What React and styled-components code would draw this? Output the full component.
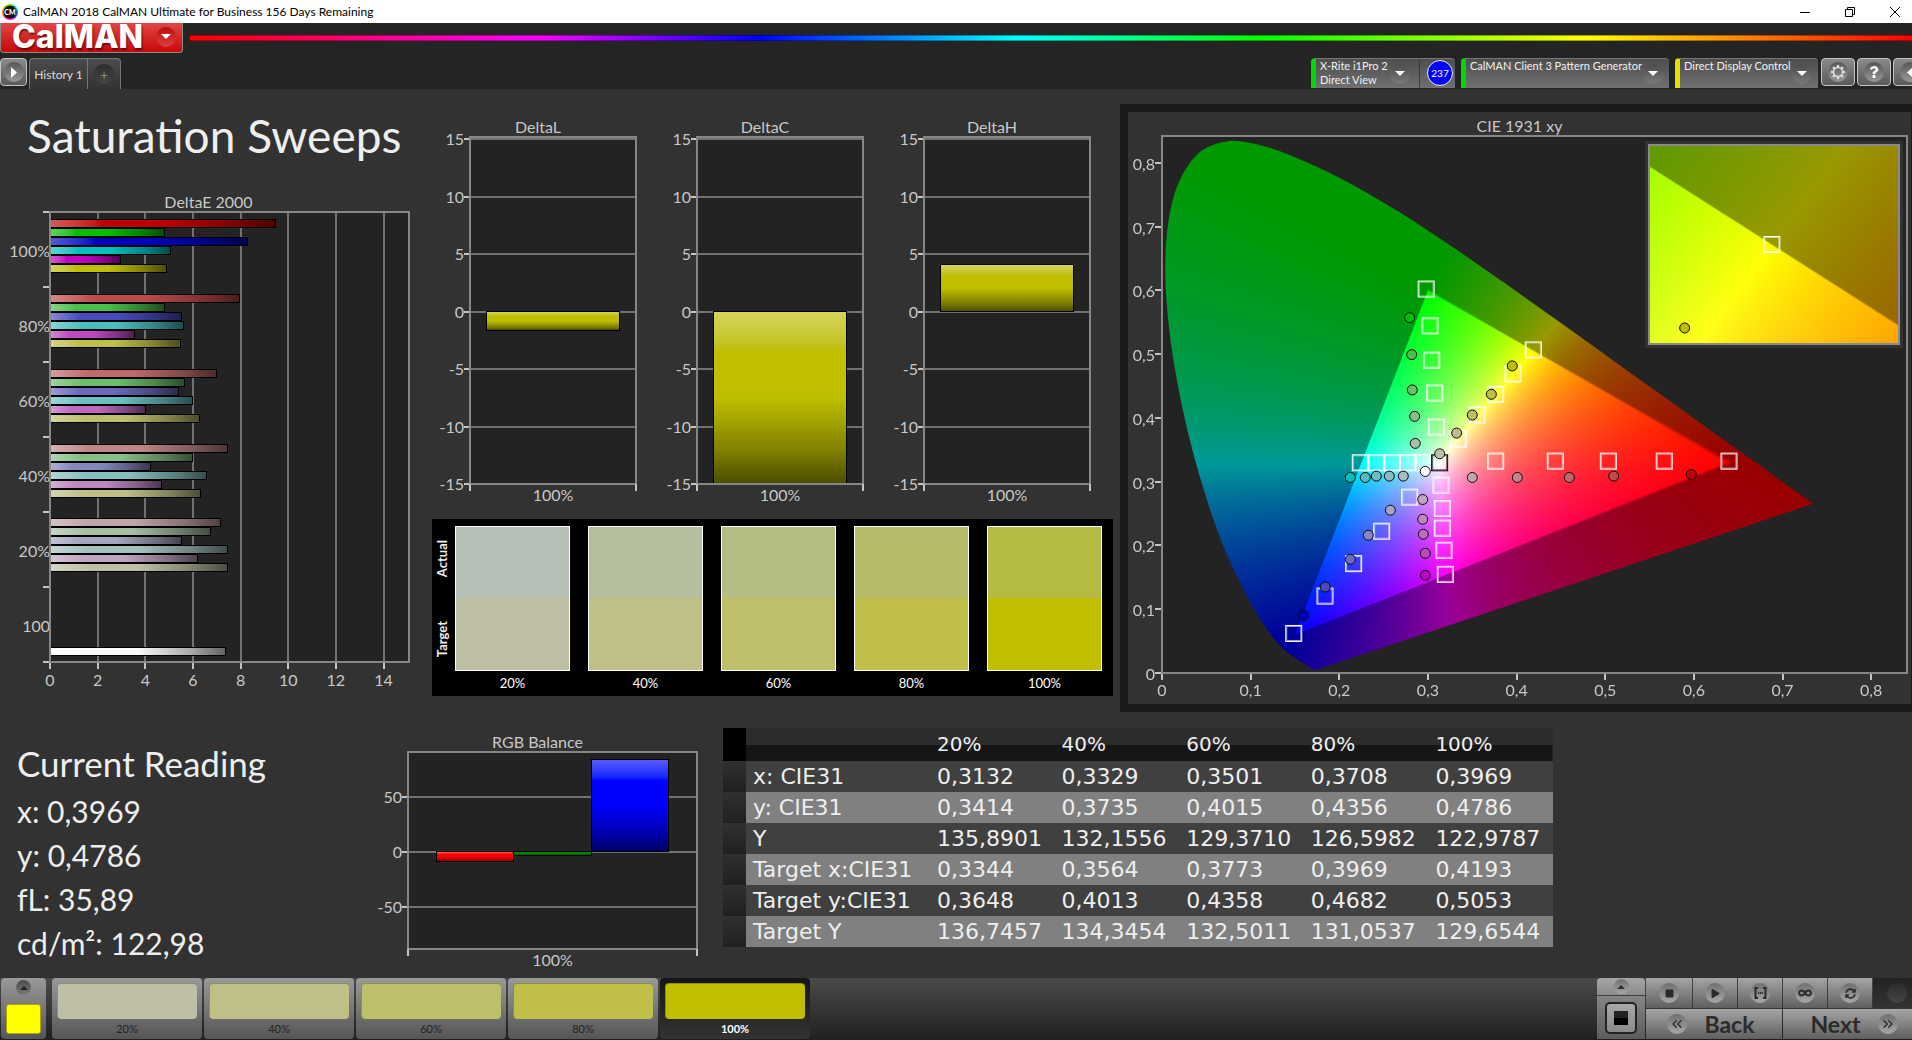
import React, { useEffect, useRef } from 'react';
import styled, { createGlobalStyle, css } from 'styled-components';
import { FaInfinity, FaPlay, FaQuestion, FaSyncAlt, FaStop } from 'react-icons/fa';
import { ChevronsLeft, ChevronsRight } from 'lucide-react';

const LEVELS = ['20%', '40%', '60%', '80%', '100%'];
const ACTUAL = ['#b6bfb5', '#b6bf9d', '#b5bd85', '#b7bb68', '#b5bb42'];
const TARGET = ['#bfbfa5', '#bfbf87', '#bfbf6a', '#bfbf4a', '#bfbf00'];

// low channel of a colour at 20 / 40 / 60 / 80 / 100 % saturation
const LOW = [165, 135, 106, 74, 0];
const HUES = {
  red: [1, 0, 0],
  green: [0, 1, 0],
  blue: [0, 0, 1],
  cyan: [0, 1, 1],
  magenta: [1, 0, 1],
  yellow: [1, 1, 0],
};
const HUE_NAMES = Object.keys(HUES);

const shade = (hue, level) => {
  const [r, g, b] = HUES[hue].map((on) => (on ? 191 : LOW[level]));
  return `rgb(${r}, ${g}, ${b})`;
};

const DELTA_E = [
  { label: '100%', level: 4, values: [9.46, 4.81, 8.29, 5.06, 2.96, 4.89] },
  { label: '80%', level: 3, values: [7.95, 4.81, 5.52, 5.6, 3.55, 5.48] },
  { label: '60%', level: 2, values: [6.99, 5.65, 5.39, 5.98, 4.01, 6.28] },
  { label: '40%', level: 1, values: [7.45, 5.98, 4.22, 6.57, 4.68, 6.32] },
  { label: '20%', level: 0, values: [7.16, 6.74, 5.52, 7.45, 6.19, 7.45] },
];
const WHITE_DELTA_E = 7.37;

const TABLE_ROWS = [
  ['x: CIE31', '0,3132', '0,3329', '0,3501', '0,3708', '0,3969'],
  ['y: CIE31', '0,3414', '0,3735', '0,4015', '0,4356', '0,4786'],
  ['Y', '135,8901', '132,1556', '129,3710', '126,5982', '122,9787'],
  ['Target x:CIE31', '0,3344', '0,3564', '0,3773', '0,3969', '0,4193'],
  ['Target y:CIE31', '0,3648', '0,4013', '0,4358', '0,4682', '0,5053'],
  ['Target Y', '136,7457', '134,3454', '132,5011', '131,0537', '129,6544'],
];

const LOCUS = [
  [0.1741, 0.005], [0.1733, 0.0048], [0.1714, 0.0051], [0.1689, 0.0069], [0.1644, 0.0109],
  [0.1566, 0.0177], [0.144, 0.0297], [0.1355, 0.0399], [0.1241, 0.0578], [0.1096, 0.0868],
  [0.0913, 0.1327], [0.0687, 0.2007], [0.0454, 0.295], [0.0235, 0.4127], [0.0082, 0.5384],
  [0.0039, 0.6548], [0.0139, 0.7502], [0.0389, 0.812], [0.0743, 0.8338], [0.1142, 0.8262],
  [0.1547, 0.8059], [0.1929, 0.7816], [0.2296, 0.7543], [0.2658, 0.7243], [0.3016, 0.6923],
  [0.3373, 0.6589], [0.3731, 0.6245], [0.4087, 0.5896], [0.4441, 0.5547], [0.4788, 0.5202],
  [0.5125, 0.4866], [0.5448, 0.4544], [0.5752, 0.4242], [0.6029, 0.3965], [0.627, 0.3725],
  [0.6658, 0.334], [0.6915, 0.3083], [0.719, 0.2809], [0.7347, 0.2653],
];

const TARGET_POINTS = [
  [0.298, 0.602], [0.3023, 0.5443], [0.3042, 0.4904], [0.3076, 0.439], [0.3095, 0.3856],
  [0.4189, 0.5066], [0.3959, 0.4689], [0.3764, 0.437], [0.3553, 0.4045], [0.3342, 0.3668],
  [0.3764, 0.3322], [0.4437, 0.3322], [0.5035, 0.3322], [0.5666, 0.3322], [0.6396, 0.3322],
  [0.2237, 0.3296], [0.2418, 0.3296], [0.2598, 0.3296], [0.2771, 0.3296], [0.2952, 0.3296],
  [0.3147, 0.2945], [0.3162, 0.2579], [0.3162, 0.227], [0.3181, 0.1924], [0.3196, 0.1547],
  [0.2794, 0.2757], [0.2478, 0.2223], [0.2162, 0.1715], [0.1839, 0.1206], [0.1486, 0.062],
];

// 20 % first, 100 % last
const MEASURED = {
  green: [[0.2857, 0.36], [0.285, 0.4024], [0.2823, 0.4438], [0.2817, 0.4992], [0.2794, 0.5573]],
  yellow: [[0.3132, 0.3437], [0.3324, 0.3762], [0.35, 0.4045], [0.3715, 0.437], [0.3951, 0.4815]],
  red: [[0.35, 0.3066], [0.4008, 0.3066], [0.4595, 0.3066], [0.5095, 0.3087], [0.5971, 0.3113]],
  cyan: [[0.2722, 0.3087], [0.2564, 0.3087], [0.2418, 0.3087], [0.2293, 0.3066], [0.2124, 0.3066]],
  magenta: [[0.2941, 0.2721], [0.2941, 0.2411], [0.2948, 0.2176], [0.297, 0.1877], [0.297, 0.1532]],
  blue: [[0.2576, 0.2553], [0.2327, 0.216], [0.2124, 0.1783], [0.1842, 0.1348], [0.1594, 0.0903]],
};

const CIE_VIEW = { x0: 0, x1: 0.8404, y0: 0, y1: 0.842 };
const INSET_VIEW = { x0: 0.388, x1: 0.4517, y0: 0.4738, y1: 0.5368 };

const pct = (n) => `${n * 100}%`;
const comma = (n) => String(n).replace('.', ',');

function chromaColor(x, y, softness) {
  const z = 1 - x - y;
  const r = 3.2406 * x - 1.5372 * y - 0.4986 * z;
  const g = -0.9689 * x + 1.8758 * y + 0.0415 * z;
  const b = 0.0557 * x - 0.204 * y + 1.057 * z;
  const max = Math.max(r, g, b);
  const edge = Math.min(r, g, b) / max;
  // soft step on the gamut edge
  const gain = 0.6 + 0.4 * Math.min(1, Math.max(0, edge / softness + 0.5));
  return [r, g, b].map((c) => (Math.max(0, c) / max) * 255 * gain);
}

function ChromaField({ view, width, height }) {
  const ref = useRef(null);

  useEffect(() => {
    const ctx = ref.current.getContext('2d');
    const img = ctx.createImageData(width, height);
    const sx = width / (view.x1 - view.x0);
    const sy = height / (view.y1 - view.y0);
    for (let j = 0; j < height; j++) {
      for (let i = 0; i < width; i++) {
        const x = view.x0 + (i + 0.5) / sx;
        const y = view.y1 - (j + 0.5) / sy;
        const c = chromaColor(x, y, 6 / sx);
        const k = (j * width + i) * 4;
        img.data[k] = c[0];
        img.data[k + 1] = c[1];
        img.data[k + 2] = c[2];
        img.data[k + 3] = 255;
      }
    }
    ctx.putImageData(img, 0, 0);

    // keep only what lies inside the spectral locus
    const pts = LOCUS.map(([x, y]) => [(x - view.x0) * sx, (view.y1 - y) * sy]);
    ctx.globalCompositeOperation = 'destination-in';
    ctx.beginPath();
    ctx.moveTo(...pts[0]);
    for (let i = 0; i < pts.length - 1; i++) {
      const p0 = pts[Math.max(0, i - 1)];
      const p1 = pts[i];
      const p2 = pts[i + 1];
      const p3 = pts[Math.min(pts.length - 1, i + 2)];
      ctx.bezierCurveTo(
        p1[0] + (p2[0] - p0[0]) / 6,
        p1[1] + (p2[1] - p0[1]) / 6,
        p2[0] - (p3[0] - p1[0]) / 6,
        p2[1] - (p3[1] - p1[1]) / 6,
        p2[0],
        p2[1],
      );
    }
    ctx.closePath();
    ctx.fill();
    ctx.globalCompositeOperation = 'source-over';
  }, [view, width, height]);

  return <Field ref={ref} width={width} height={height} />;
}

function Marker({ view, at, children }) {
  const x = (at[0] - view.x0) / (view.x1 - view.x0);
  const y = (view.y1 - at[1]) / (view.y1 - view.y0);
  return (
    <svg x={pct(x)} y={pct(y)} overflow="visible">
      {children}
    </svg>
  );
}

function Square({ color = '#fff' }) {
  return (
    <g fill="none" stroke={color}>
      <rect x="-8" y="-8" width="16" height="16" strokeWidth="1" />
      <rect x="-7" y="-7" width="14" height="14" strokeWidth="1" strokeOpacity="0.6" />
    </g>
  );
}

function Dot({ color }) {
  return <circle r="5" fill={color} stroke="#0a0a0a" strokeWidth="1" />;
}

function Gradients() {
  const glossy = (id, color, vertical) => (
    <linearGradient key={id} id={id} x1="0" y1="0" x2={vertical ? 0 : 1} y2={vertical ? 1 : 0}>
      <stop offset="0" stopColor={`color-mix(in srgb, ${color} 65%, #fff)`} />
      <stop offset="0.23" stopColor={color} />
      <stop offset="0.5" stopColor={color} />
      <stop offset="0.8" stopColor={`color-mix(in srgb, ${color} 68%, #000)`} />
      <stop offset="1" stopColor={`color-mix(in srgb, ${color} 40%, #000)`} />
    </linearGradient>
  );
  return (
    <HiddenSvg aria-hidden="true">
      <defs>
        {HUE_NAMES.map((hue) => LOW.map((_, level) => glossy(`${hue}-${level}`, shade(hue, level), false)))}
        {glossy('white-bar', 'rgb(250, 250, 250)', false)}
        {glossy('bar-yellow', 'rgb(191, 191, 0)', true)}
        {glossy('bar-red', 'rgb(255, 0, 0)', true)}
        {glossy('bar-green', 'rgb(0, 128, 0)', true)}
        {glossy('bar-blue', 'rgb(0, 0, 255)', true)}
      </defs>
    </HiddenSvg>
  );
}

function DeltaEChart() {
  const max = 15.07;
  const ticks = [0, 2, 4, 6, 8, 10, 12, 14];
  const groups = [...DELTA_E.map((g) => g.label), '100'];
  return (
    <Chart $left={50} $right={15}>
      <ChartTitle $shift={42}>DeltaE 2000</ChartTitle>
      <Plot $height={450}>
        <rect className="back" width="100%" height="100%" />
        {ticks.map((t) => (
          <g key={t}>
            <line className="grid" x1={pct(t / max)} x2={pct(t / max)} y1="0" y2="100%" />
            <svg x={pct(t / max)} y="100%" overflow="visible">
              <line className="tick" y2="7" />
              <text y="24" textAnchor="middle">{t}</text>
            </svg>
          </g>
        ))}
        {groups.map((label, i) => (
          <svg key={label} y={pct(i / 6)} overflow="visible">
            <line className="tick" x1="-7" x2="0" />
            <text x="0" y="45" textAnchor="end">{label}</text>
          </svg>
        ))}
        <svg y="100%" overflow="visible">
          <line className="tick" x1="-7" x2="0" />
        </svg>
        {DELTA_E.map((group, i) => (
          <svg key={group.label} y={pct(i / 6)} overflow="visible">
            {group.values.map((v, j) => (
              <rect
                key={HUE_NAMES[j]}
                className="bar"
                y={7 + j * 9}
                width={pct(v / max)}
                height="8"
                fill={`url(#${HUE_NAMES[j]}-${group.level})`}
              />
            ))}
          </svg>
        ))}
        <svg y={pct(5 / 6)} overflow="visible">
          <rect className="bar" y="60" width={pct(WHITE_DELTA_E / max)} height="8" fill="url(#white-bar)" />
        </svg>
        <rect className="frame" width="100%" height="100%" />
      </Plot>
    </Chart>
  );
}

function ColumnChart({ title, top, bottom, ticks, bars, height }) {
  const pos = (v) => (top - v) / (top - bottom);
  const step = 0.8 / bars.length;
  return (
    <Chart $left={46} $right={15}>
      <ChartTitle>{title}</ChartTitle>
      <Plot $height={height}>
        <rect className="back" width="100%" height="100%" />
        {ticks.map((t) => (
          <svg key={t} y={pct(pos(t))} overflow="visible">
            <line className="grid" x1="0" x2="100%" />
            <line className="tick" x1="-6" x2="0" />
            <text x="-6" y="6" textAnchor="end">{t}</text>
          </svg>
        ))}
        {bars.map(({ value, fill }, i) => {
          const y0 = pos(Math.max(value, 0));
          const y1 = Math.min(1, pos(Math.min(value, 0)));
          return (
            <rect
              key={fill}
              className="bar"
              x={pct(0.1 + i * step)}
              y={pct(y0)}
              width={pct(step)}
              height={pct(y1 - y0)}
              fill={`url(#${fill})`}
            />
          );
        })}
        <rect className="frame" width="100%" height="100%" />
        <svg y="100%" overflow="visible">
          <line className="tick" y2="7" />
          <line className="tick" x1="100%" x2="100%" y2="7" />
          <text x="50%" y="17" textAnchor="middle">100%</text>
        </svg>
      </Plot>
    </Chart>
  );
}

function CieChart() {
  const ticks = [0, 0.1, 0.2, 0.3, 0.4, 0.5, 0.6, 0.7, 0.8];
  return (
    <CiePanel>
      <ChartTitle>CIE 1931 xy</ChartTitle>
      <CieStack>
        <ChromaField view={CIE_VIEW} width={745} height={537} />
        <Plot $height={537}>
          {ticks.map((t) => (
            <g key={t}>
              <Marker view={CIE_VIEW} at={[t, 0]}>
                <line className="tick" y2="7" />
                <text y="23" textAnchor="middle">{comma(t)}</text>
              </Marker>
              <Marker view={CIE_VIEW} at={[0, t]}>
                <line className="tick" x1="-7" x2="0" />
                <text x="-7" y="7" textAnchor="end">{comma(t)}</text>
              </Marker>
            </g>
          ))}
          <rect className="frame" width="100%" height="100%" />
          {TARGET_POINTS.map((at) => (
            <Marker key={at.join()} view={CIE_VIEW} at={at}>
              <Square />
            </Marker>
          ))}
          <Marker view={CIE_VIEW} at={[0.3132, 0.3296]}>
            <Square color="#000" />
          </Marker>
          <Marker view={CIE_VIEW} at={[0.297, 0.3161]}>
            <Dot color="#fff" />
          </Marker>
          {Object.entries(MEASURED).map(([hue, points]) =>
            points.map((at, level) => (
              <Marker key={`${hue}${level}`} view={CIE_VIEW} at={at}>
                <Dot color={shade(hue, level)} />
              </Marker>
            )),
          )}
        </Plot>
        <Inset>
          <ChromaField view={INSET_VIEW} width={248} height={197} />
          <Plot $height={197}>
            <Marker view={INSET_VIEW} at={[0.4193, 0.5053]}>
              <Square />
            </Marker>
            <Marker view={INSET_VIEW} at={[0.3969, 0.4786]}>
              <Dot color="#bfbf00" />
            </Marker>
          </Plot>
        </Inset>
      </CieStack>
    </CiePanel>
  );
}

function Caret({ up, size = 10, color = '#fff' }) {
  return (
    <svg width={size} height={size / 2} viewBox="0 0 10 5" aria-hidden="true">
      <path d={up ? 'M0 5 L5 0 L10 5 Z' : 'M0 0 L10 0 L5 5 Z'} fill={color} />
    </svg>
  );
}

function Gear() {
  return (
    <svg width="16" height="16" viewBox="0 0 16 16" fill="none" stroke="#ddd" aria-hidden="true">
      <circle cx="8" cy="8" r="4.5" strokeWidth="1.5" />
      {[0, 45, 90, 135, 180, 225, 270, 315].map((a) => (
        <path key={a} d="M8 1 V3.2" strokeWidth="2.4" transform={`rotate(${a} 8 8)`} />
      ))}
    </svg>
  );
}

function Brackets() {
  return (
    <svg width="13" height="12" viewBox="0 0 13 12" fill="none" stroke="#2b2b2b" aria-hidden="true">
      <path d="M4 1 H1.5 V11 H4 M9 1 H11.5 V11 H9" strokeWidth="2" />
      <path d="M4 6 H9" strokeWidth="2" strokeDasharray="1.2 0.8" />
    </svg>
  );
}

function WindowBar() {
  return (
    <TitleBar>
      <AppIcon>CM</AppIcon>
      <TitleText>CalMAN 2018 CalMAN Ultimate for Business 156 Days Remaining</TitleText>
      <WindowButton aria-label="Minimize">
        <svg width="10" height="10" stroke="#000" fill="none"><path d="M0 5.5 H10" /></svg>
      </WindowButton>
      <WindowButton aria-label="Restore">
        <svg width="10" height="10" stroke="#000" fill="none">
          <path d="M0.5 2.5 H7.5 V9.5 H0.5 Z M2.5 2 V0.5 H9.5 V7.5 H8" />
        </svg>
      </WindowButton>
      <WindowButton aria-label="Close">
        <svg width="10" height="10" stroke="#000" fill="none"><path d="M0 0 L10 10 M10 0 L0 10" /></svg>
      </WindowButton>
    </TitleBar>
  );
}

function Header() {
  return (
    <TopBar>
      <BrandRow>
        <BrandButton>
          <span>CalMAN</span>
          <Round $size={20} $tone="red"><Caret /></Round>
        </BrandButton>
        <Rainbow />
      </BrandRow>
      <TabRow>
        <SquareButton $width={27} aria-label="Expand">
          <Round $size={20}>
            <svg width="6" height="11"><path d="M0 0 L6 5.5 L0 11 Z" fill="#fff" /></svg>
          </Round>
        </SquareButton>
        <HistoryTabs>
          <HistoryTab>History 1</HistoryTab>
          <AddTab aria-label="Add history">
            <Round $size={20} $tone="dark">+</Round>
          </AddTab>
        </HistoryTabs>
        <Spacer />
        <Device $width={144} $color="#00d900">
          <DeviceText>X-Rite i1Pro 2<br />Direct View</DeviceText>
          <Round $size={20} $tone="dim"><Caret /></Round>
          <DeviceBadge><Badge>237</Badge></DeviceBadge>
        </Device>
        <Device $width={208} $color="#00d900">
          <DeviceText>CalMAN Client 3 Pattern Generator</DeviceText>
          <Round $size={20} $tone="dim"><Caret /></Round>
        </Device>
        <Device $width={143} $color="#e6e000">
          <DeviceText>Direct Display Control</DeviceText>
          <Round $size={20} $tone="dim"><Caret /></Round>
        </Device>
        <ToolButtons>
          <SquareButton $width={34} aria-label="Settings"><Round $size={20}><Gear /></Round></SquareButton>
          <SquareButton $width={34} aria-label="Help"><Round $size={20}><FaQuestion size={12} /></Round></SquareButton>
          <SquareButton $width={34} aria-label="Collapse">
            <Round $size={20}>
              <svg width="6" height="11"><path d="M6 0 L0 5.5 L6 11 Z" fill="#fff" /></svg>
            </Round>
          </SquareButton>
        </ToolButtons>
      </TabRow>
    </TopBar>
  );
}

function Swatches() {
  return (
    <SwatchPanel>
      <SideLabels>
        <SideLabel>Actual</SideLabel>
        <SideLabel>Target</SideLabel>
      </SideLabels>
      {LEVELS.map((level, i) => (
        <SwatchItem key={level}>
          <SwatchPair $top={ACTUAL[i]} $bottom={TARGET[i]} />
          <SwatchCaption>{level}</SwatchCaption>
        </SwatchItem>
      ))}
    </SwatchPanel>
  );
}

function ReadingTable() {
  return (
    <TableBox>
      <Table>
        <thead>
          <tr>
            <MarkCell />
            <NameCell aria-label="Value" />
            {LEVELS.map((l) => <th key={l} scope="col">{l}</th>)}
          </tr>
        </thead>
        <tbody>
          {TABLE_ROWS.map(([name, ...cells]) => (
            <tr key={name}>
              <MarkCell />
              <NameCell scope="row">{name}</NameCell>
              {cells.map((c) => <td key={c}>{c}</td>)}
            </tr>
          ))}
        </tbody>
      </Table>
    </TableBox>
  );
}

function Footer() {
  const ink = '#2b2b2b';
  return (
    <BottomBar>
      <CurrentColor aria-label="Current color">
        <Round $size={15} $tone="dim"><Caret up size={8} color="#222" /></Round>
        <CurrentSwatch />
      </CurrentColor>
      {LEVELS.map((level, i) => (
        <LevelTab key={level} $active={level === '100%'}>
          <LevelSwatch $color={TARGET[i]} />
          {level}
        </LevelTab>
      ))}
      <Spacer />
      <StopColumn>
        <StopTop aria-label="More">
          <Round $size={15} $tone="silver"><Caret up size={8} color="#333" /></Round>
        </StopTop>
        <StopMain aria-label="Pattern window">
          <StopIcon />
        </StopMain>
      </StopColumn>
      <Controls>
        <ControlRow>
          <Control $width={46} aria-label="Stop"><Round $tone="silver"><FaStop size={9} color={ink} /></Round></Control>
          <Control $width={44} aria-label="Play"><Round $tone="silver"><FaPlay size={9} color={ink} /></Round></Control>
          <Control $width={44} aria-label="Range"><Round $tone="silver"><Brackets /></Round></Control>
          <Control $width={44} aria-label="Loop"><Round $tone="silver"><FaInfinity size={14} color={ink} /></Round></Control>
          <Control $width={44} aria-label="Refresh"><Round $tone="silver"><FaSyncAlt size={11} color={ink} /></Round></Control>
          <Control $width={48} $dark aria-label="Record"><Round $tone="dark" /></Control>
        </ControlRow>
        <ControlRow>
          <NavButton $width={136}>
            <Round $tone="silver"><ChevronsLeft size={16} color={ink} /></Round>
            Back
          </NavButton>
          <NavButton $width={148}>
            Next
            <Round $tone="silver"><ChevronsRight size={16} color={ink} /></Round>
          </NavButton>
        </ControlRow>
      </Controls>
    </BottomBar>
  );
}

function App() {
  const deltaTicks = [15, 10, 5, 0, -5, -10, -15];
  const deltas = [['DeltaL', -1.63], ['DeltaC', -20], ['DeltaH', 4.1]];
  return (
    <Page>
      <GlobalStyle />
      <Gradients />
      <WindowBar />
      <Header />
      <Workspace>
        <TopGrid>
          <section>
            <PageTitle>Saturation Sweeps</PageTitle>
            <DeltaEChart />
          </section>
          <Middle>
            <DeltaRow>
              {deltas.map(([title, value]) => (
                <ColumnChart
                  key={title}
                  title={title}
                  top={15.2}
                  bottom={-15}
                  ticks={deltaTicks}
                  bars={[{ value, fill: 'bar-yellow' }]}
                  height={347}
                />
              ))}
            </DeltaRow>
            <Swatches />
          </Middle>
          <CieChart />
        </TopGrid>
        <BottomGrid>
          <Reading>
            <h2>Current Reading</h2>
            <p>x: 0,3969</p>
            <p>y: 0,4786</p>
            <p>fL: 35,89</p>
            <p>cd/m²: 122,98</p>
          </Reading>
          <BalanceBox>
            <ColumnChart
              title="RGB Balance"
              top={90.5}
              bottom={-88.5}
              ticks={[50, 0, -50]}
              bars={[
                { value: -9.3, fill: 'bar-red' },
                { value: -3.7, fill: 'bar-green' },
                { value: 83.6, fill: 'bar-blue' },
              ]}
              height={197}
            />
          </BalanceBox>
          <ReadingTable />
        </BottomGrid>
      </Workspace>
      <Footer />
    </Page>
  );
}

const GlobalStyle = createGlobalStyle`
  * {
    box-sizing: border-box;
  }
  body {
    margin: 0;
    background: #242424;
    color: #eee;
    font-family: Lato, 'Open Sans', sans-serif;
    overflow-x: hidden;
  }
  button {
    font-family: inherit;
    border: none;
    padding: 0;
    margin: 0;
  }
  h1, h2, p {
    margin: 0;
    font-weight: 400;
  }
`;

const Page = styled.div`
  min-height: 100vh;
  display: flex;
  flex-direction: column;
`;

const HiddenSvg = styled.svg`
  position: absolute;
  width: 0;
  height: 0;
`;

const TitleBar = styled.div`
  height: 23px;
  background: #fff;
  color: #000;
  display: flex;
  align-items: center;
  padding-left: 2px;
  font-size: 12px;
`;

const AppIcon = styled.span`
  width: 16px;
  height: 16px;
  border-radius: 50%;
  background: radial-gradient(#111 0 55%, transparent 60%),
    conic-gradient(#6f0, #0cf, #33f, #f0f, #f33, #fc0, #6f0);
  color: #fff;
  font-size: 7px;
  font-weight: 900;
  line-height: 16px;
  text-align: center;
`;

const TitleText = styled.span`
  flex: 1;
  padding-left: 5px;
`;

const WindowButton = styled.button`
  width: 45px;
  height: 18px;
  background: none;
  display: flex;
  align-items: center;
  justify-content: center;

  &:last-child {
    width: 40px;
    padding-left: 5px;
  }
`;

const TopBar = styled.header`
  height: 66px;
  display: flex;
  flex-direction: column;
  justify-content: space-between;
  overflow: hidden;
`;

const BrandRow = styled.div`
  display: flex;
  align-items: center;
`;

const BrandButton = styled.button`
  width: 183px;
  height: 30px;
  margin-right: 7px;
  display: flex;
  align-items: center;
  justify-content: space-between;
  padding: 0 6px 2px 11px;
  border: 1px solid #8a8a8a;
  border-top: none;
  border-radius: 0 0 4px 4px;
  background: linear-gradient(#e24545, #c80808);
  color: #fff;
  font-family: Inter, sans-serif;
  font-size: 32px;
  font-weight: 800;
  line-height: 28px;
  text-shadow: 1px 2px 2px rgba(0, 0, 0, 0.5);
`;

const Rainbow = styled.div`
  flex: 1;
  height: 6px;
  border: solid rgba(0, 0, 0, 0.35);
  border-width: 1px 0;
  background: linear-gradient(90deg, #f00, #f0f 20%, #00f 33%, #0ff 48%, #0f0 62%, #ff0 81%, #f00);
`;

const TONES = {
  red: 'linear-gradient(#b50d0d, #e04040)',
  dark: 'linear-gradient(#2c2c2c, #454545)',
  dim: 'linear-gradient(#4b4b4b, #7a7a7a)',
  silver: 'linear-gradient(#6f6f6f, #a8a8a8)',
  grey: 'linear-gradient(#555, #999)',
};

const Round = styled.span`
  flex: none;
  width: ${({ $size = 20 }) => $size}px;
  height: ${({ $size = 20 }) => $size}px;
  border-radius: 50%;
  display: flex;
  align-items: center;
  justify-content: center;
  background: ${({ $tone = 'grey' }) => TONES[$tone]};
`;

const TabRow = styled.div`
  display: flex;
  align-items: flex-start;
  height: 31px;
`;

const SquareButton = styled.button`
  flex: none;
  width: ${({ $width }) => $width}px;
  height: 28px;
  border: 1px solid #c4c4c4;
  border-radius: 4px;
  background: linear-gradient(#8a8a8a, #5a5a5a);
  color: #fff;
  display: flex;
  align-items: center;
  justify-content: center;
`;

const HistoryTabs = styled.div`
  display: flex;
  height: 31px;
  margin-left: 2px;
  border: 1px solid #777;
  border-bottom: none;
  border-radius: 4px 4px 0 0;
  background: linear-gradient(#4b4b4b, #333);
`;

const HistoryTab = styled.button`
  width: 58px;
  background: none;
  border-right: 1px solid #777;
  color: #ddd;
  font-size: 12px;
`;

const AddTab = styled.button`
  width: 32px;
  background: none;
  color: #888;
  display: flex;
  align-items: center;
  justify-content: center;
  font-size: 14px;
`;

const Spacer = styled.div`
  flex: 1;
`;

const Device = styled.div`
  width: ${({ $width }) => $width}px;
  height: 30px;
  margin-right: 6px;
  padding-right: 6px;
  display: flex;
  align-items: center;
  border-left: 5px solid ${({ $color }) => $color};
  border-top: 1px solid #777;
  border-radius: 4px 4px 0 0;
  background: linear-gradient(#4e4e4e, #707070);
`;

const DeviceText = styled.div`
  flex: 1;
  align-self: flex-start;
  padding-left: 4px;
  color: #f0f0f0;
  font-size: 11px;
  line-height: 14px;
  white-space: nowrap;
`;

const DeviceBadge = styled.div`
  align-self: stretch;
  margin: 1px -4px 0 9px;
  padding-left: 7px;
  border-left: 1px solid #3a3a3a;
`;

const Badge = styled.div`
  width: 26px;
  height: 26px;
  border: 1px solid #eee;
  border-radius: 50%;
  background: #00f;
  color: #fff;
  font-size: 10px;
  line-height: 24px;
  text-align: center;
`;

const ToolButtons = styled.div`
  display: flex;
  gap: 2px;
  margin: 0 -15px 0 -3px;
`;

const Workspace = styled.main`
  flex: 1;
  padding-top: 15px;
  background: #323232;
`;

const TopGrid = styled.div`
  display: grid;
  grid-template-columns: 424fr 696fr 792fr;
`;

const PageTitle = styled.h1`
  padding: 5px 0 29px 27px;
  font-size: 46px;
  line-height: 54px;
`;

const Chart = styled.div`
  padding: 0 ${({ $right }) => $right}px 0 ${({ $left }) => $left}px;
`;

const ChartTitle = styled.div`
  margin-left: ${({ $shift = 30 }) => -$shift}px;
  color: #c8c8c8;
  font-size: 16px;
  line-height: 20px;
  text-align: center;
`;

const Plot = styled.svg`
  display: block;
  width: 100%;
  height: ${({ $height }) => $height}px;
  overflow: visible;

  line,
  .back,
  .frame,
  .bar {
    shape-rendering: crispEdges;
  }
  .back {
    fill: #232323;
  }
  .frame {
    fill: none;
    stroke: #868686;
    stroke-width: 2px;
  }
  .grid {
    stroke: #727272;
    stroke-width: 2px;
  }
  .tick {
    stroke: #c4c4c4;
    stroke-width: 2px;
  }
  .bar {
    stroke: #000;
    stroke-width: 1px;
  }
  text {
    fill: #c8c8c8;
    font-size: 16px;
  }
`;

const Middle = styled.section`
  padding: 13px 7px 0 0;
`;

const DeltaRow = styled.div`
  display: grid;
  grid-template-columns: repeat(3, 1fr);
  padding-right: 8px;
`;

const SwatchPanel = styled.div`
  margin: 35px 0 0 8px;
  height: 177px;
  padding: 7px 11px 0 0;
  display: flex;
  gap: 18px;
  background: #000;
`;

const SideLabels = styled.div`
  width: 23px;
  height: 145px;
  margin-right: -18px;
  padding-right: 4px;
  display: flex;
  flex-direction: column;
  justify-content: center;
  align-items: center;
  gap: 44px;
`;

const SideLabel = styled.span`
  writing-mode: vertical-rl;
  transform: rotate(180deg);
  font-size: 13px;
  font-weight: 700;
`;

const SwatchItem = styled.div`
  flex: 1;
`;

const SwatchPair = styled.div`
  height: 145px;
  border: 1px solid #fff;
  background: linear-gradient(${({ $top, $bottom }) => `${$top} 50%, ${$bottom} 50%`});
`;

const SwatchCaption = styled.div`
  color: #fff;
  font-size: 13px;
  line-height: 24px;
  text-align: center;
`;

const CiePanel = styled.section`
  padding: 4px 4px 31px 34px;
  border: 8px solid #1b1b1b;
  border-right-width: 1px;
`;

const CieStack = styled.div`
  position: relative;
  display: grid;
  background: #232323;

  > canvas,
  > svg {
    grid-area: 1 / 1;
  }
`;

const Field = styled.canvas`
  display: block;
  width: 100%;
  height: 100%;
`;

const Inset = styled.div`
  position: absolute;
  top: 5px;
  right: 4px;
  width: 258px;
  height: 207px;
  display: grid;
  border: 3px solid #323232;
  outline: 2px solid #8a8a8a;
  outline-offset: -5px;
  padding: 2px;

  > canvas,
  > svg {
    grid-area: 1 / 1;
  }
`;

const BottomGrid = styled.div`
  display: grid;
  grid-template-columns: 362fr 350fr 841fr 359fr;
`;

const Reading = styled.section`
  padding: 31px 0 0 17px;

  h2 {
    margin-bottom: 6px;
    font-size: 35px;
    line-height: 40px;
  }
  p {
    font-size: 30px;
    line-height: 44px;
  }
`;

const BalanceBox = styled.div`
  padding-top: 20px;
`;

const TableBox = styled.div`
  padding: 16px 0 0 11px;
`;

const Table = styled.table`
  width: 100%;
  table-layout: fixed;
  border-collapse: collapse;
  font-family: 'DejaVu Sans', sans-serif;
  font-size: 22px;

  th,
  td {
    padding: 0 0 0 7px;
    font-weight: 400;
    text-align: left;
    line-height: 31px;
    white-space: nowrap;
  }
  thead tr {
    height: 33px;
    background: linear-gradient(#2c2c2c 50%, #161616 50%);
    font-size: 20px;
  }
  thead td {
    background: #000;
  }
  tbody tr {
    height: 31px;
    background: #404040;
  }
  tbody tr:nth-child(even) {
    background: #808080;
  }
  tbody td:first-child {
    background: linear-gradient(#303030, #202020);
  }
`;

const MarkCell = styled.td`
  width: 23px;
`;

const NameCell = styled.th`
  width: 184px;
`;

const BottomBar = styled.footer`
  height: 62px;
  display: flex;
  gap: 2px;
  padding: 0 0 1px 1px;
  overflow: hidden;
  background: linear-gradient(#4a4a4a, #202020);
`;

const silver = css`
  background: linear-gradient(#999, #555);
`;

const CurrentColor = styled.button`
  ${silver}
  width: 45px;
  margin-right: 4px;
  padding: 2px 5px 5px;
  border-radius: 4px;
  display: flex;
  flex-direction: column;
  justify-content: space-between;
  align-items: center;
`;

const CurrentSwatch = styled.span`
  width: 35px;
  height: 30px;
  border: 1px solid #a8a800;
  border-radius: 3px;
  background: #ff0;
`;

const LevelTab = styled.button`
  width: 150px;
  padding: 5px 5px 0;
  border-radius: 4px;
  background: ${({ $active }) => ($active ? 'linear-gradient(#151515, #333)' : 'linear-gradient(#999, #555)')};
  color: ${({ $active }) => ($active ? '#fff' : '#222')};
  font-size: 11px;
  font-weight: ${({ $active }) => ($active ? 700 : 400)};
  line-height: 20px;
`;

const LevelSwatch = styled.span`
  display: block;
  height: 36px;
  border: solid rgba(0, 0, 0, 0.25);
  border-width: 1px 0 0 1px;
  border-radius: 4px;
  background: ${({ $color }) => $color};
`;

const StopColumn = styled.div`
  width: 48px;
  margin-right: -1px;
  display: flex;
  flex-direction: column;
  gap: 1px;
`;

const StopTop = styled.button`
  height: 17px;
  border-radius: 4px 4px 0 0;
  background: linear-gradient(#a5a5a5, #8c8c8c);
  display: flex;
  align-items: center;
  justify-content: center;
`;

const StopMain = styled.button`
  flex: 1;
  background: linear-gradient(#858585, #5c5c5c);
  display: flex;
  align-items: center;
  justify-content: center;
`;

const StopIcon = styled.span`
  width: 32px;
  height: 32px;
  border: 2px solid #222;
  border-radius: 5px;
  background: linear-gradient(#222 50%, #000 50%) center / 14px 14px no-repeat,
    linear-gradient(#a8a8a8, #8a8a8a);
`;

const Controls = styled.div`
  width: 266px;
  display: flex;
  flex-direction: column;
  gap: 1px;
`;

const ControlRow = styled.div`
  flex: 1;
  display: flex;
  gap: 1px;
`;

const Control = styled.button`
  flex: none;
  width: ${({ $width }) => $width}px;
  display: flex;
  align-items: center;
  justify-content: center;
  background: ${({ $dark }) => ($dark ? 'linear-gradient(#222, #333)' : 'linear-gradient(#a5a5a5, #5f5f5f)')};
`;

const NavButton = styled(Control)`
  gap: 17px;
  padding-right: 6px;
  color: #2b2b2b;
  font-size: 23px;
  font-weight: 700;
  line-height: 28px;
`;

export default App;
